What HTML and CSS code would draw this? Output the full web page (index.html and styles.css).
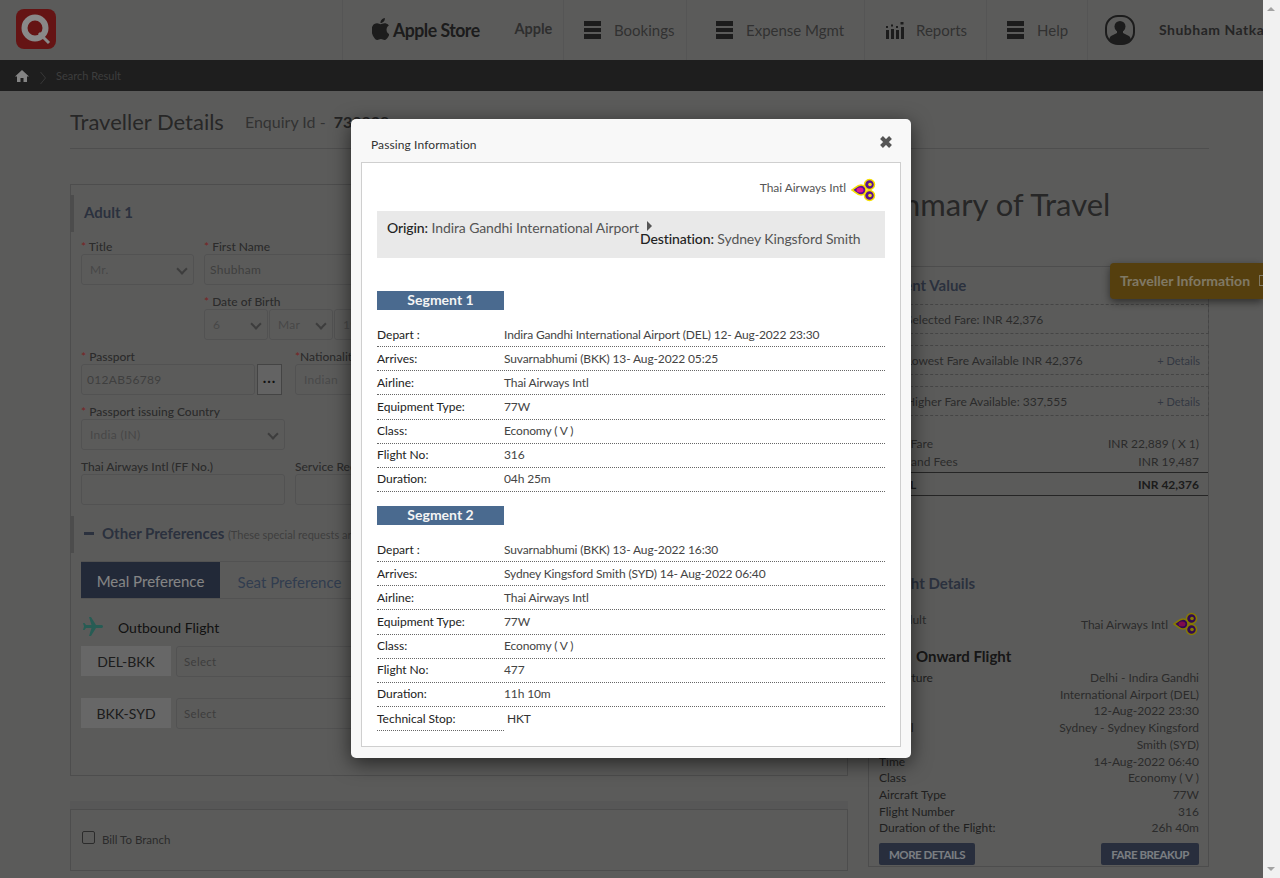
FILE: index.html
```html
<!DOCTYPE html>
<html lang="en">

<head>
    <meta charset="UTF-8">
    <meta name="viewport" content="width=device-width, initial-scale=1.0">
    <title>Traveller Details</title>
    <link rel="stylesheet" href="styles.css">
</head>

<body>
    <svg class="defs" width="0" height="0">
        <defs>
            <g id="thai">
                <circle cx="18.500" cy="6.500" r="5" fill="#5b1390" stroke="#f7e000" stroke-width="1.500"/>
                <circle cx="18.500" cy="17.500" r="5" fill="#5b1390" stroke="#f7e000" stroke-width="1.500"/>
                <path fill="#5b1390" stroke="#f7e000" stroke-width="1.500" d="M1 12c3-1.500 5-5 9-5 3 0 5 2.500 5 5s-2 5-5 5c-4 0-6-3.500-9-5z"/>
                <circle cx="19" cy="6.500" r="1.800" fill="#f7e000"/>
                <circle cx="19" cy="17.500" r="1.800" fill="#f7e000"/>
                <ellipse cx="9" cy="12" rx="3.500" ry="2.500" fill="#e8148c"/>
            </g>
        </defs>
    </svg>

    <div class="window">
        <div class="page">
            <header class="topbar">
                <div class="logo">
                    <svg width="40" height="40" viewBox="0 0 40 40">
                        <rect x="0" y="0" width="40" height="40" rx="8" fill="#b82626"/>
                        <circle cx="19" cy="19" r="10.500" fill="none" stroke="#fafafa" stroke-width="6"/>
                        <path d="M23 24l10 10" stroke="#fafafa" stroke-width="3"/>
                    </svg>
                </div>
                <nav class="nav">
                    <div class="nav-item nav-store">
                        <svg class="apple" width="17" height="22" viewBox="3 0 18 24"><path fill="#333" d="M12.152 6.896c-.948 0-2.415-1.078-3.960-1.040-2.040.027-3.910 1.183-4.961 3.014-2.117 3.675-.546 9.103 1.519 12.090 1.013 1.454 2.208 3.090 3.792 3.039 1.520-.065 2.090-.987 3.935-.987 1.831 0 2.350.987 3.960.948 1.637-.026 2.676-1.480 3.676-2.948 1.156-1.688 1.636-3.325 1.662-3.415-.039-.013-3.182-1.221-3.220-4.857-.026-3.040 2.480-4.494 2.597-4.559-1.429-2.090-3.623-2.324-4.390-2.376-2-.156-3.675 1.090-4.610 1.090zM15.530 3.830c.843-1.012 1.400-2.427 1.245-3.830-1.207.052-2.662.805-3.532 1.818-.780.896-1.454 2.338-1.273 3.714 1.338.104 2.715-.688 3.559-1.701"/></svg>
                        <span class="store-name">Apple Store</span>
                        <span class="store-link">Apple</span>
                    </div>
                    <div class="nav-item nav-bookings">
                        <span class="burger"><i></i><i></i><i></i></span>Bookings
                    </div>
                    <div class="nav-item nav-expense">
                        <span class="burger"><i></i><i></i><i></i></span>Expense Mgmt
                    </div>
                    <div class="nav-item nav-reports">
                        <svg class="reports-icon" width="18" height="17" viewBox="0 0 18 17">
                            <path fill="#333" d="M0 8h3v9H0zM5 7h3v10H5zM10 8h3v9h-3zM15 5h3v12h-3z"/>
                            <path fill="#333" d="M0 4h2v2H0zM5 2.500h2v2H5zM10 4h2v2h-2zM14.500 0h3v2.500h-3z"/>
                        </svg>
                        Reports
                    </div>
                    <div class="nav-item nav-help">
                        <span class="burger"><i></i><i></i><i></i></span>Help
                    </div>
                    <div class="nav-item nav-user">
                        <svg class="avatar" width="30" height="30" viewBox="0 0 30 30">
                            <rect x="1" y="1" width="28" height="28" rx="12" fill="none" stroke="#333" stroke-width="2"/>
                            <circle cx="15" cy="11.500" r="5.500" fill="#333"/>
                            <path fill="#333" d="M12 15h6v3l6 3c1.500 1 2 3 1.500 5-2.500 2.500-6 3-10.500 3s-8-.5-10.500-3c-.5-2 0-4 1.500-5l6-3z"/>
                        </svg>
                        <span class="user-name">Shubham Natkar</span>
                    </div>
                </nav>
            </header>

            <div class="crumbs">
                <svg width="14" height="12" viewBox="0 0 14 12"><path fill="#f0f0f0" d="M7 0L0 6.500h2V12h3.500V8h3v4H12V6.500h2z"/></svg>
                <svg class="crumb-arrow" width="6" height="14" viewBox="0 0 6 14"><path d="M.5 1l5 6-5 6" fill="none" stroke="#666"/></svg>
                <span>Search Result</span>
            </div>

            <div class="content">
                <div class="title-row">
                    <h1>Traveller Details</h1>
                    <span class="enquiry">Enquiry Id - <b>730838</b></span>
                </div>

                <div class="columns">
                    <div class="col-left">
                        <section class="panel traveller-panel">
                            <h3 class="section-title">Adult 1</h3>
                            <div class="form-row first-row">
                                <label class="field w-title"><span><em>*</em> Title</span>
                                    <div class="input select">Mr.</div>
                                </label>
                                <label class="field w-name"><span><em>*</em> First Name</span>
                                    <div class="input">Shubham</div>
                                </label>
                            </div>
                            <div class="form-row dob-row">
                                <div class="field"><span><em>*</em> Date of Birth</span>
                                    <div class="dob">
                                        <div class="input select w-day">6</div>
                                        <div class="input select w-day">Mar</div>
                                        <div class="input select w-year">1990</div>
                                    </div>
                                </div>
                            </div>
                            <div class="form-row">
                                <div class="field w-wide"><span><em>*</em> Passport</span>
                                    <div class="passport">
                                        <div class="input passport-no">012AB56789</div>
                                        <button class="dots">...</button>
                                    </div>
                                </div>
                                <div class="field w-name"><span><em>*</em>Nationality</span>
                                    <div class="input dim">Indian</div>
                                </div>
                            </div>
                            <div class="form-row">
                                <div class="field w-wide"><span><em>*</em> Passport issuing Country</span>
                                    <div class="input select dim">India (IN)</div>
                                </div>
                            </div>
                            <div class="form-row">
                                <div class="field w-wide"><span>Thai Airways Intl (FF No.)</span>
                                    <div class="input"></div>
                                </div>
                                <div class="field w-name"><span>Service Request</span>
                                    <div class="input"></div>
                                </div>
                            </div>

                            <h3 class="section-title prefs-title"><span class="minus"></span>Other Preferences <small>(These special requests are subject to availability)</small></h3>
                            <div class="tabs">
                                <div class="tab active">Meal Preference</div>
                                <div class="tab">Seat Preference</div>
                            </div>
                            <div class="outbound">
                                <svg width="24" height="24" viewBox="0 0 24 24"><path fill="#47a899" transform="rotate(90 12 12)" d="M21 16v-2l-8-5V3.500c0-.83-.67-1.500-1.500-1.500S10 2.670 10 3.500V9l-8 5v2l8-2.500V19l-2 1.500V22l3.500-1 3.500 1v-1.500L13 19v-5.500l8 2.500z"/></svg>
                                <span>Outbound Flight</span>
                            </div>
                            <div class="route"><div class="route-code">DEL-BKK</div><div class="input route-select">Select</div></div>
                            <div class="route"><div class="route-code">BKK-SYD</div><div class="input route-select">Select</div></div>
                        </section>
                        <div class="strip"></div>
                        <section class="panel bill-panel">
                            <span class="check"></span>
                            <span>Bill To Branch</span>
                        </section>
                    </div>

                    <aside class="col-right">
                        <h2 class="summary-title">Summary of Travel</h2>
                        <div class="summary-box">
                            <h3 class="box-title">Current Value</h3>
                            <div class="fare-line"><span>Selected Fare: INR 42,376</span></div>
                            <div class="fare-line"><span>Lowest Fare Available INR 42,376</span><a>+ Details</a></div>
                            <div class="fare-line"><span>Higher Fare Available: 337,555</span><a>+ Details</a></div>
                            <div class="price-rows">
                                <div class="price"><span>Adult Fare</span><span>INR 22,889 ( X 1)</span></div>
                                <div class="price"><span>Taxes and Fees</span><span>INR 19,487</span></div>
                            </div>
                            <div class="price total"><span>TOTAL</span><span>INR 42,376</span></div>

                            <h3 class="box-title flight-title">Flight Details</h3>
                            <div class="flight-head">
                                <span>1 x Adult</span>
                                <span class="flight-airline">Thai Airways Intl
                                    <svg width="26" height="24" viewBox="0 0 26 24"><use href="#thai"/></svg>
                                </span>
                            </div>
                            <h4 class="onward">Onward Flight</h4>
                            <dl class="flight-rows">
                                <div><dt>Departure</dt><dd>Delhi - Indira Gandhi International Airport (DEL)</dd></div>
                                <div><dt>Time</dt><dd>12-Aug-2022 23:30</dd></div>
                                <div><dt>Arrival</dt><dd>Sydney - Sydney Kingsford Smith (SYD)</dd></div>
                                <div><dt>Time</dt><dd>14-Aug-2022 06:40</dd></div>
                                <div><dt>Class</dt><dd>Economy ( V )</dd></div>
                                <div><dt>Aircraft Type</dt><dd>77W</dd></div>
                                <div><dt>Flight Number</dt><dd>316</dd></div>
                                <div><dt>Duration of the Flight:</dt><dd>26h 40m</dd></div>
                            </dl>
                            <div class="box-buttons">
                                <button>MORE DETAILS</button>
                                <button>FARE BREAKUP</button>
                            </div>
                        </div>
                    </aside>
                </div>
            </div>

            <div class="side-tab">Traveller Information <span class="side-icon"></span></div>

            <div class="overlay">
                <div class="modal">
                    <div class="modal-head">
                        <span>Passing Information</span>
                        <svg class="close" width="14" height="14" viewBox="0 0 14 14"><path d="M2.500 2.500l9 9M11.500 2.500l-9 9" stroke="#555" stroke-width="4"/></svg>
                    </div>
                    <div class="modal-body">
                        <div class="airline">Thai Airways Intl
                            <svg width="26" height="24" viewBox="0 0 26 24"><use href="#thai"/></svg>
                        </div>
                        <div class="route-band">
                            <div class="origin"><b>Origin:</b> Indira Gandhi International Airport</div>
                            <div class="destination"><span class="route-arrow"></span><b>Destination:</b> Sydney Kingsford Smith</div>
                        </div>

                        <div class="segment-head first">Segment 1</div>
                        <div class="seg-row"><span class="seg-label">Depart :</span><span class="seg-value">Indira Gandhi International Airport (DEL) 12- Aug-2022 23:30</span></div>
                        <div class="seg-row"><span class="seg-label">Arrives:</span><span class="seg-value">Suvarnabhumi (BKK) 13- Aug-2022 05:25</span></div>
                        <div class="seg-row"><span class="seg-label">Airline:</span><span class="seg-value">Thai Airways Intl</span></div>
                        <div class="seg-row"><span class="seg-label">Equipment Type:</span><span class="seg-value">77W</span></div>
                        <div class="seg-row"><span class="seg-label">Class:</span><span class="seg-value">Economy ( V )</span></div>
                        <div class="seg-row"><span class="seg-label">Flight No:</span><span class="seg-value">316</span></div>
                        <div class="seg-row"><span class="seg-label">Duration:</span><span class="seg-value">04h 25m</span></div>

                        <div class="segment-head">Segment 2</div>
                        <div class="seg-row"><span class="seg-label">Depart :</span><span class="seg-value">Suvarnabhumi (BKK) 13- Aug-2022 16:30</span></div>
                        <div class="seg-row"><span class="seg-label">Arrives:</span><span class="seg-value">Sydney Kingsford Smith (SYD) 14- Aug-2022 06:40</span></div>
                        <div class="seg-row"><span class="seg-label">Airline:</span><span class="seg-value">Thai Airways Intl</span></div>
                        <div class="seg-row"><span class="seg-label">Equipment Type:</span><span class="seg-value">77W</span></div>
                        <div class="seg-row"><span class="seg-label">Class:</span><span class="seg-value">Economy ( V )</span></div>
                        <div class="seg-row"><span class="seg-label">Flight No:</span><span class="seg-value">477</span></div>
                        <div class="seg-row"><span class="seg-label">Duration:</span><span class="seg-value">11h 10m</span></div>
                        <div class="seg-row stop"><span class="seg-label">Technical Stop:</span><span class="seg-value">HKT</span></div>
                    </div>
                </div>
            </div>
        </div>

        <div class="scrollbar">
            <span class="arrow-up"></span>
            <span class="arrow-down"></span>
        </div>
    </div>
</body>
</html>
```

FILE: styles.css
```css
* {
    box-sizing: border-box;
}

body {
    margin: 0;
    font-family: 'Lato', 'Liberation Sans', sans-serif;
    font-size: 12px;
    color: #4f4f4f;
}

.defs {
    display: block;
    height: 0;
}

.window {
    display: flex;
    height: 878px;
    overflow: hidden;
}

.page {
    position: relative;
    width: 1263px;
    height: 878px;
    overflow: hidden;
    background-color: #a7a7a5;
}

/* top bar */
.topbar {
    display: flex;
    height: 60px;
    justify-content: space-between;
}

.logo {
    padding: 9px 0 0 16px;
}

.nav {
    display: flex;
    width: 921px;
    flex-shrink: 0;
}

.nav-item {
    display: flex;
    align-items: center;
    border-left: 1px solid #9c9c9c;
    font-size: 15px;
    color: #5a5a5a;
    white-space: nowrap;
}

.nav-store {
    width: 221px;
    padding-left: 29px;
}

.apple {
    margin-top: -3px;
}

.store-name {
    margin-left: 4px;
    font-size: 18px;
    font-weight: 700;
    letter-spacing: -0.5px;
    color: #333;
    transform: scaleX(0.98);
    transform-origin: left;
}

.store-link {
    margin-left: 33px;
    margin-top: -3px;
    font-size: 14.500px;
    font-weight: 700;
    color: #555;
}

.nav-bookings {
    width: 123px;
    padding-left: 20px;
}

.nav-expense {
    width: 178px;
    padding-left: 29px;
}

.nav-reports {
    width: 122px;
    padding-left: 21px;
}

.nav-help {
    width: 101px;
    padding-left: 20px;
}

.nav-user {
    width: 176px;
    padding-left: 17px;
    overflow: hidden;
}

.avatar {
    flex-shrink: 0;
}

.burger {
    display: flex;
    flex-direction: column;
    gap: 2px;
    width: 17px;
    margin-right: 13px;
}

.burger i {
    display: block;
    height: 4.500px;
    background-color: #333;
}

.reports-icon {
    margin-right: 12px;
}

.user-name {
    flex-shrink: 0;
    margin-left: 24px;
    margin-top: -2px;
    font-size: 14px;
    font-weight: 700;
    letter-spacing: 0.5px;
    color: #444;
}

.crumbs {
    display: flex;
    align-items: center;
    height: 31px;
    padding-left: 15px;
    background-color: #373737;
    font-size: 11px;
    color: #707070;
}

.crumb-arrow {
    margin: 4px 10px 0 11px;
}

/* main content */
.content {
    padding: 0 54px 0 70px;
}

.title-row {
    display: flex;
    align-items: center;
    gap: 21px;
    height: 58px;
    padding-top: 3px;
    border-bottom: 1px solid #8e8e8e;
}

.title-row h1 {
    margin: 0;
    font-size: 22px;
    font-weight: 400;
    color: #484848;
}

.enquiry {
    font-size: 16px;
    color: #5c5c5c;
}

.enquiry b {
    margin-left: 4px;
    color: #404040;
}

.columns {
    display: flex;
    justify-content: space-between;
    margin-top: 35px;
}

.col-left {
    width: 778px;
}

.panel {
    border: 1px solid #8d8d8d;
}

.traveller-panel {
    height: 592px;
    padding: 10px 10px 0 10px;
}

.section-title {
    position: relative;
    margin: 0;
    height: 37px;
    line-height: 35px;
    padding-left: 3px;
    font-size: 15px;
    font-weight: 700;
    color: #4f5a72;
}

.section-title::before {
    content: "";
    position: absolute;
    left: -11px;
    top: 0;
    width: 4px;
    height: 37px;
    background-color: #8a8a8a;
}

.form-row {
    display: flex;
    gap: 10px;
    margin-bottom: 7px;
}

.first-row {
    margin-top: 5px;
}

.field {
    display: block;
}

.field > span {
    display: block;
    height: 17px;
    font-size: 12px;
    line-height: 19px;
    font-weight: 500;
    color: #4f4f4f;
}

.field em {
    font-style: normal;
    color: #d84545;
}

.w-title {
    width: 113px;
}

.w-name {
    width: 300px;
}

.w-wide {
    width: 204px;
}

.dob-row {
    padding-left: 123px;
}

.input {
    display: flex;
    align-items: center;
    height: 31px;
    padding: 0 5px;
    border: 1px solid #959595;
    border-radius: 3px;
    font-size: 12px;
    letter-spacing: 0.3px;
    color: #737373;
}

.dim {
    padding-left: 8px;
    color: #858585;
}

.select {
    position: relative;
    padding-left: 8px;
    color: #828282;
}

.select::after {
    content: "";
    position: absolute;
    right: 7px;
    top: 10px;
    width: 6px;
    height: 6px;
    border-right: 2px solid #707070;
    border-bottom: 2px solid #707070;
    transform: rotate(45deg);
}

.dob {
    display: flex;
    gap: 1px;
}

.w-day {
    width: 64px;
}

.w-year {
    width: 64px;
}

.passport {
    display: flex;
    gap: 2px;
}

.passport-no {
    width: 174px;
}

.dots {
    width: 25px;
    height: 31px;
    padding: 0 0 6px;
    border: 1px solid #7c7c7c;
    border-radius: 0;
    background-color: #b4b4b4;
    font-family: inherit;
    font-size: 15px;
    font-weight: 700;
    letter-spacing: 1px;
    color: #1f1f1f;
}

.prefs-title {
    margin-top: 11px;
    padding-left: 21px;
}

.minus {
    position: absolute;
    left: 3px;
    top: 16px;
    width: 10px;
    height: 3px;
    background-color: #4f5a72;
}

.prefs-title small {
    font-size: 11px;
    font-weight: 400;
    color: #727272;
}

.tabs {
    display: flex;
    height: 38px;
    margin-top: 8px;
    border: 1px solid #959595;
    border-left: 0;
    font-size: 15px;
}

.tab {
    width: 139px;
    padding-top: 11px;
    text-align: center;
    color: #5a6f90;
}

.tab.active {
    padding-top: 10px;
    background-color: #3f4b66;
    color: #f2f2f2;
}

.outbound {
    display: flex;
    align-items: center;
    gap: 13px;
    height: 24px;
    margin-top: 16px;
    font-size: 14px;
    color: #222;
}

.route {
    display: flex;
    gap: 5px;
    margin-top: 7px;
    margin-bottom: 21px;
}

.route-code {
    display: flex;
    align-items: center;
    justify-content: center;
    width: 90px;
    height: 30px;
    background-color: #bcbcbc;
    font-size: 14px;
    color: #333;
}

.route-select {
    flex: 1;
    padding-left: 7px;
    font-size: 11.500px;
    color: #707070;
}

.strip {
    height: 33px;
    border-bottom: 8px solid #9f9f9f;
}

.bill-panel {
    display: flex;
    align-items: center;
    gap: 7px;
    height: 62px;
    padding-left: 11px;
    padding-bottom: 1px;
    font-size: 11.500px;
}

.check {
    margin-top: -4px;
    width: 13px;
    height: 13px;
    border: 1px solid #4f4f4f;
    border-radius: 2px;
}

/* summary column */
.col-right {
    width: 341px;
    margin-top: -35px;
}

.summary-title {
    margin: 35px 0 0 -7px;
    height: 82px;
    font-size: 31px;
    font-weight: 400;
    line-height: 40px;
    color: #484848;
}

.summary-box {
    height: 601px;
    padding-top: 1px;
    border: 1px solid #8d8d8d;
}

.box-title {
    margin: 8px 0 0 6px;
    height: 28px;
    font-size: 15px;
    font-weight: 700;
    color: #4f5a72;
}

.fare-line {
    display: flex;
    justify-content: space-between;
    align-items: center;
    height: 30px;
    margin: 0 -1px 11px 6px;
    padding: 0 8px 0 30px;
    border: 1px dashed #7e7e7e;
    font-size: 12px;
}

.fare-line a {
    font-size: 11px;
    color: #5d6678;
}

.price-rows {
    margin-top: 18px;
}

.price {
    display: flex;
    justify-content: space-between;
    height: 18px;
    padding: 0 9px 0 10px;
    font-size: 12px;
    align-items: center;
}

.price.total {
    height: 24px;
    margin-top: 2px;
    border-top: 1px solid #444;
    border-bottom: 1px solid #444;
    font-weight: 700;
    color: #333;
}

.flight-title {
    margin-top: 78px;
    margin-left: 18px;
    height: 22px;
}

.flight-head {
    display: flex;
    justify-content: space-between;
    padding: 0 9px 0 10px;
    margin-top: 16px;
    font-size: 12px;
}

.flight-airline {
    display: flex;
    align-items: center;
    gap: 5px;
}

.onward {
    margin: 11px 0 0 47px;
    height: 23px;
    font-size: 15px;
    font-weight: 700;
    color: #2a2a2a;
}

.flight-rows {
    margin: 0;
    padding: 0 9px 0 10px;
    font-size: 12px;
    line-height: 16.700px;
}

.flight-rows div {
    display: flex;
    justify-content: space-between;
}

.flight-rows dt {
    color: #3a3a3a;
}

.flight-rows dd {
    margin: 0;
    width: 170px;
    text-align: right;
    color: #4f4f4f;
}

.box-buttons {
    display: flex;
    justify-content: space-between;
    margin-top: 6px;
    padding: 0 9px 0 10px;
}

.box-buttons button {
    height: 22px;
    padding: 0 10px;
    border: 0;
    border-radius: 2px;
    background-color: #4a5470;
    font-family: inherit;
    font-size: 11.500px;
    font-weight: 700;
    letter-spacing: -0.5px;
    color: #dfe4ec;
}

.side-tab {
    position: absolute;
    top: 263px;
    right: 0;
    width: 153px;
    height: 36px;
    padding: 9px 0 0 10px;
    overflow: hidden;
    border-radius: 4px 0 0 4px;
    background-color: #9b731b;
    box-shadow: 0 3px 8px rgba(0, 0, 0, 0.5);
    font-size: 14px;
    font-weight: 700;
    white-space: nowrap;
    color: #e8dcb8;
}

.side-icon {
    display: inline-block;
    width: 9px;
    height: 11px;
    margin-left: 6px;
    border: 1px solid #e8dcb8;
}

/* popup */
.overlay {
    position: absolute;
    inset: 0;
    display: flex;
    justify-content: center;
    padding: 119px 1px 0 0;
    background-color: rgba(0, 0, 0, 0.45);
}

.modal {
    width: 560px;
    height: 639px;
    padding: 0 10px;
    border-radius: 5px;
    background-color: #f8f8f8;
    box-shadow: 0 5px 20px rgba(0, 0, 0, 0.6);
}

.modal-head {
    display: flex;
    justify-content: space-between;
    height: 43px;
    padding: 18px 8px 0 10px;
    font-size: 12px;
    letter-spacing: 0.1px;
    color: #333;
}

.close {
    margin-top: -2px;
}

.modal-body {
    height: 585px;
    padding: 15px 15px 0;
    border: 1px solid #cfcfcf;
    background-color: #fff;
}

.airline {
    display: flex;
    justify-content: flex-end;
    align-items: flex-start;
    gap: 5px;
    height: 23px;
    padding-right: 8px;
    font-size: 12px;
    line-height: 20px;
    letter-spacing: -0.05px;
    color: #555;
}

.route-band {
    display: flex;
    height: 47px;
    margin-top: 10px;
    padding: 8px 0 0 10px;
    background-color: #e9e9e9;
    font-size: 14px;
    letter-spacing: -0.1px;
    color: #555;
}

.route-band b {
    font-weight: 500;
    color: #222;
}

.origin {
    width: 253px;
    white-space: nowrap;
}

.destination {
    position: relative;
    padding-top: 11px;
    white-space: nowrap;
}

.route-arrow {
    position: absolute;
    left: 7px;
    top: 2px;
    border-left: 5px solid #555;
    border-top: 5px solid transparent;
    border-bottom: 5px solid transparent;
}

.segment-head {
    width: 127px;
    height: 19px;
    margin-top: 14px;
    margin-bottom: 13px;
    background-color: #4a6a8f;
    font-size: 14px;
    font-weight: 700;
    line-height: 18px;
    text-align: center;
    color: #f4f4f4;
}

.segment-head.first {
    margin-top: 33px;
}

.seg-row {
    display: flex;
    align-items: center;
    height: 24.150px;
    padding-bottom: 1px;
    border-bottom: 1px dotted #666;
    font-size: 12px;
}

.seg-label {
    width: 127px;
    color: #222;
}

.seg-value {
    letter-spacing: -0.14px;
    color: #444;
}

.seg-row.stop {
    width: 127px;
    white-space: nowrap;
}

.seg-row.stop .seg-label {
    flex-shrink: 0;
}

.seg-row.stop .seg-value {
    padding-left: 3px;
    color: #333;
}

.scrollbar {
    position: relative;
    width: 17px;
    background-color: #f1f1f1;
}

.arrow-up,
.arrow-down {
    position: absolute;
    left: 4px;
    border-left: 4px solid transparent;
    border-right: 4px solid transparent;
}

.arrow-up {
    top: 7px;
    border-bottom: 4px solid #a3a3a3;
}

.arrow-down {
    bottom: 7px;
    border-top: 4px solid #a3a3a3;
}
```
